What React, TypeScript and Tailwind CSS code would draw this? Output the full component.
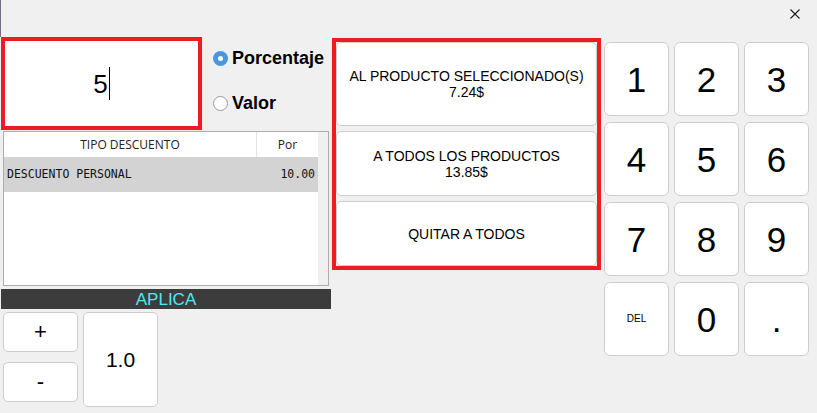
import React, { useState } from "react";

const keys = ["1", "2", "3", "4", "5", "6", "7", "8", "9", "DEL", "0", "."];

const App: React.FC = () => {
  const [modo, setModo] = useState<"pct" | "valor">("pct");
  const [valor] = useState("5");

  return (
    <div className="w-[817px] h-[413px] bg-[#f0f0f0] flex flex-col overflow-hidden font-['Liberation_Sans',Arial,sans-serif] text-black">
      {/* top bar */}
      <div className="h-[37px] flex justify-end border-l border-[#6f6f8c]">
        <button className="mt-[9px] mr-[17px] w-[10px] h-[10px] flex items-center justify-center">
          <svg width="10" height="10" viewBox="0 0 10 10" className="block">
            <path d="M0.5 0.5 L9.5 9.5 M9.5 0.5 L0.5 9.5" stroke="#1a1a1a" strokeWidth="1.1" fill="none" />
          </svg>
        </button>
      </div>

      <div className="flex items-start">
        {/* left column */}
        <div className="ml-[1px] w-[330px] flex flex-col">
          <div className="flex">
            <div className="w-[201px] h-[93px] border-4 border-[#ed1c24] bg-white flex items-center justify-center">
              <span className="text-[26px] leading-none">{valor}</span>
              <span className="w-px h-[33px] bg-black ml-[1px]" />
            </div>
            <div className="ml-[11px] flex flex-col">
              <label
                className="mt-[12px] flex items-center gap-[4px] cursor-pointer"
                onClick={() => setModo("pct")}
              >
                <span
                  className={
                    modo === "pct"
                      ? "w-[15px] h-[15px] rounded-full bg-[#4a97e0] flex items-center justify-center"
                      : "w-[15px] h-[15px] rounded-full bg-white border border-[#9a9a9a]"
                  }
                >
                  {modo === "pct" && <span className="w-[5px] h-[5px] rounded-full bg-white" />}
                </span>
                <span className="text-[18px] font-bold leading-none">Porcentaje</span>
              </label>
              <label
                className="mt-[27px] flex items-center gap-[4px] cursor-pointer"
                onClick={() => setModo("valor")}
              >
                <span
                  className={
                    modo === "valor"
                      ? "w-[15px] h-[15px] rounded-full bg-[#4a97e0] flex items-center justify-center"
                      : "w-[15px] h-[15px] rounded-full bg-white border border-[#9a9a9a]"
                  }
                >
                  {modo === "valor" && <span className="w-[5px] h-[5px] rounded-full bg-white" />}
                </span>
                <span className="text-[18px] font-bold leading-none">Valor</span>
              </label>
            </div>
          </div>

          {/* table */}
          <div className="mt-[1px] ml-[2px] w-[326px] h-[155px] border border-[#adadad] bg-white flex">
            <div className="flex-1 flex flex-col">
              <div className="h-[25px] flex items-center text-[12px] font-['Open_Sans',sans-serif] text-[#222]">
                <div className="w-[253px] h-full flex items-center justify-center border-r border-[#e3e3e3]">
                  TIPO DESCUENTO
                </div>
                <div className="flex-1 flex items-center justify-center">Por</div>
              </div>
              <div className="h-[35px] bg-[#d3d3d3] flex items-center justify-between pl-[3px] pr-[3px] font-['DejaVu_Sans_Mono',monospace] text-[11.5px] text-[#111]">
                <span>DESCUENTO PERSONAL</span>
                <span>10.00</span>
              </div>
            </div>
            <div className="w-[10px] bg-[#f0f0f0]" />
          </div>

          {/* aplica */}
          <div className="mt-[3px] h-[20px] bg-[#3c3c3c] flex items-center justify-center text-[17px] leading-none text-[#55e4f2]">
            APLICA
          </div>

          {/* bottom buttons */}
          <div className="mt-[3px] ml-[2px] flex gap-[5px]">
            <div className="flex flex-col gap-[10px]">
              <button className="w-[75px] h-[40px] bg-white border border-[#cdcdcd] rounded-[5px] text-[22px] leading-none">
                +
              </button>
              <button className="w-[75px] h-[40px] bg-white border border-[#cdcdcd] rounded-[5px] text-[22px] leading-none">
                -
              </button>
            </div>
            <button className="w-[75px] h-[95px] bg-white border border-[#cdcdcd] rounded-[5px] text-[21px] leading-none">
              1.0
            </button>
          </div>
        </div>

        {/* middle options */}
        <div className="ml-[1px] mt-[1px] w-[269px] h-[232px] border-4 border-[#ed1c24] flex flex-col gap-[5px] bg-[#f0f0f0]">
          <button className="h-[84px] bg-white border border-[#cdcdcd] rounded-[5px] text-[14px] leading-[16px]">
            AL PRODUCTO SELECCIONADO(S)
            <br />
            7.24$
          </button>
          <button className="h-[65px] bg-white border border-[#cdcdcd] rounded-[5px] text-[14px] leading-[16px]">
            A TODOS LOS PRODUCTOS
            <br />
            13.85$
          </button>
          <button className="h-[65px] bg-white border border-[#cdcdcd] rounded-[5px] text-[14px] leading-[16px]">
            QUITAR A TODOS
          </button>
        </div>

        {/* numpad */}
        <div className="ml-[3px] mt-[5px] grid grid-cols-[65px_65px_65px] auto-rows-[74px] gap-x-[5px] gap-y-[6px]">
          {keys.map((k) => (
            <button
              key={k}
              className={
                k === "DEL"
                  ? "bg-white border border-[#cdcdcd] rounded-[6px] text-[10px] leading-none"
                  : "bg-white border border-[#cdcdcd] rounded-[6px] text-[35px] leading-none"
              }
            >
              {k}
            </button>
          ))}
        </div>
      </div>
    </div>
  );
};

export default App;
